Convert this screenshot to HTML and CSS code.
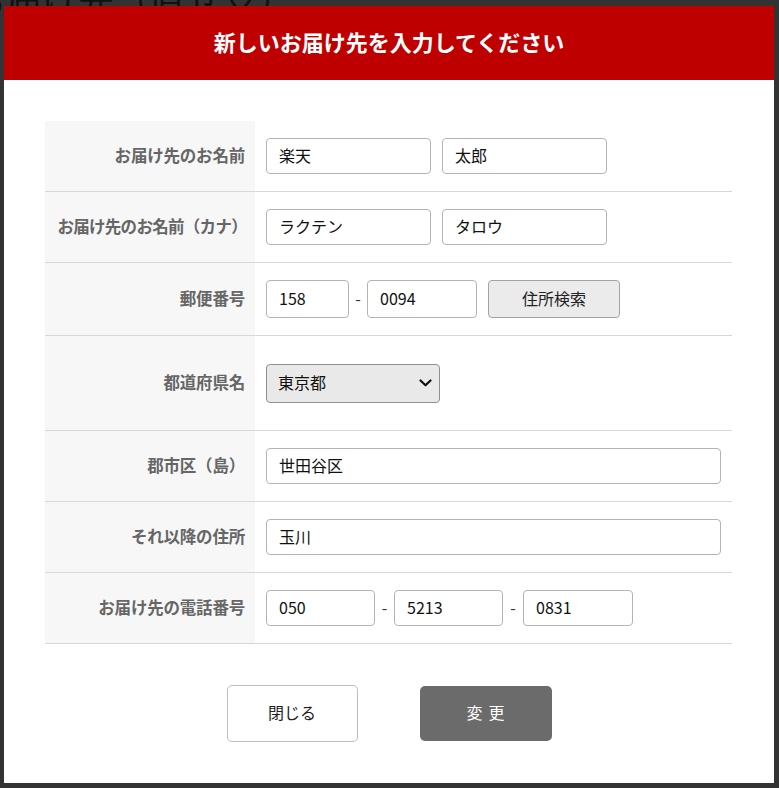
FILE: index.html
```html
<!DOCTYPE html>
<html lang="ja">
<head>
<meta charset="utf-8">
<title>新しいお届け先を入力してください</title>
<link rel="stylesheet" href="styles.css">
</head>
<body>
<div class="page-behind">
  <div class="behind-title">お届け先（直せ支）</div>
</div>
<div class="modal">
  <div class="modal-header">新しいお届け先を入力してください</div>
  <div class="modal-body">
    <div class="form-table">
      <div class="row">
        <div class="label">お届け先のお名前</div>
        <div class="value">
          <input class="inp w-name" type="text" value="楽天">
          <input class="inp w-name" type="text" value="太郎">
        </div>
      </div>
      <div class="row">
        <div class="label label-long">お届け先のお名前（カナ）</div>
        <div class="value">
          <input class="inp w-name" type="text" value="ラクテン">
          <input class="inp w-name" type="text" value="タロウ">
        </div>
      </div>
      <div class="row">
        <div class="label">郵便番号</div>
        <div class="value tight">
          <input class="inp inp-tall w-zip1" type="text" value="158">
          <span class="dash d18">-</span>
          <input class="inp inp-tall w-zip2" type="text" value="0094">
          <button class="btn-search" type="button">住所検索</button>
        </div>
      </div>
      <div class="row row-select">
        <div class="label">都道府県名</div>
        <div class="value">
          <div class="select-wrap">
            <select class="sel"><option>東京都</option></select>
            <svg class="chev" width="13" height="8" viewBox="0 0 13 8"><path d="M1.5 1.5 L6.5 6.3 L11.5 1.5" fill="none" stroke="#111" stroke-width="2.2" stroke-linecap="round" stroke-linejoin="round"/></svg>
          </div>
        </div>
      </div>
      <div class="row">
        <div class="label">郡市区（島）</div>
        <div class="value">
          <input class="inp w-full" type="text" value="世田谷区">
        </div>
      </div>
      <div class="row">
        <div class="label">それ以降の住所</div>
        <div class="value">
          <input class="inp w-full" type="text" value="玉川">
        </div>
      </div>
      <div class="row">
        <div class="label">お届け先の電話番号</div>
        <div class="value tight">
          <input class="inp w-tel" type="text" value="050">
          <span class="dash d19">-</span>
          <input class="inp w-tel" type="text" value="5213">
          <span class="dash d20">-</span>
          <input class="inp w-tel3" type="text" value="0831">
        </div>
      </div>
    </div>
    <div class="actions">
      <button class="btn-close" type="button">閉じる</button>
      <button class="btn-change" type="button">変更</button>
    </div>
  </div>
</div>
</body>
</html>
```
FILE: styles.css
```css
* { box-sizing: border-box; }
html, body { margin: 0; padding: 0; }
body {
  background: #333333;
  width: 779px;
  height: 788px;
  overflow: hidden;
  position: relative;
  font-family: "Noto Sans CJK JP", "Noto Sans", sans-serif;
  color: #222;
}
.behind-title {
  font-size: 36px;
  line-height: 36px;
  margin-top: -20px;
  margin-left: -30px;
  color: #111;
  white-space: nowrap;
}
.modal {
  position: absolute;
  left: 4px;
  top: 6px;
  width: 770px;
  height: 777px;
  background: #fff;
}
.modal-header {
  height: 74px;
  background: #bf0000;
  color: #fff;
  font-weight: bold;
  font-size: 22px;
  display: flex;
  align-items: center;
  justify-content: center;
  padding-bottom: 4px;
}
.modal-body {
  padding: 41px 42px 0 41px;
}
.form-table {
  width: 687px;
}
.row {
  display: grid;
  grid-template-columns: 210px 1fr;
  border-bottom: 1px solid #d8d8d8;
}
.label {
  background: #f7f7f7;
  color: #666;
  font-weight: bold;
  font-size: 16.5px;
  display: flex;
  align-items: center;
  justify-content: flex-end;
  padding-right: 10px;
  padding-bottom: 2px;
  white-space: nowrap;
  letter-spacing: -0.2px;
}
.label-long {
  letter-spacing: -0.7px;
  padding-right: 8px;
}
.value {
  display: flex;
  align-items: center;
  gap: 11px;
  padding: 17px 11px;
}
.value.tight { gap: 0; }
.row-select .value {
  padding: 28px 11px 27px;
}
.inp {
  height: 36px;
  border: 1px solid #b3b3b3;
  border-radius: 4px;
  padding: 0 12px 2px;
  font-family: "Noto Sans CJK JP", "Noto Sans", sans-serif;
  font-size: 16px;
  color: #111;
  background: #fff;
  outline: none;
}
.inp-tall { height: 38px; }
.w-name { width: 165px; }
.w-zip1 { width: 83px; }
.w-zip2 { width: 110px; margin-right: 11px; }
.w-full { width: 455px; }
.w-tel { width: 109px; }
.w-tel3 { width: 110px; }
.dash {
  display: flex;
  justify-content: center;
  font-size: 16px;
  color: #333;
  padding-bottom: 2px;
}
.d18 { width: 18px; }
.d19 { width: 19px; }
.d20 { width: 20px; }
.btn-search {
  width: 132px;
  height: 38px;
  background: #ebebeb;
  border: 1px solid #a3a3a3;
  border-radius: 4px;
  font-family: "Noto Sans CJK JP", "Noto Sans", sans-serif;
  font-size: 16px;
  color: #222;
  padding: 0 0 3px;
}
.select-wrap {
  position: relative;
  width: 174px;
  height: 39px;
}
.sel {
  appearance: none;
  -webkit-appearance: none;
  width: 174px;
  height: 39px;
  background: #e9e9e9;
  border: 1px solid #8f8f8f;
  border-radius: 4px;
  padding: 0 30px 3px 11px;
  font-family: "Noto Sans CJK JP", "Noto Sans", sans-serif;
  font-size: 16px;
  color: #111;
}
.chev {
  position: absolute;
  left: 153px;
  top: 15px;
  pointer-events: none;
}
.actions {
  display: flex;
  justify-content: center;
  align-items: center;
  gap: 62px;
  padding-top: 41px;
  margin-left: 1px;
}
.btn-close {
  width: 131px;
  height: 57px;
  background: #fff;
  border: 1px solid #bdbdbd;
  border-radius: 5px;
  font-family: "Noto Sans CJK JP", "Noto Sans", sans-serif;
  font-size: 16px;
  color: #222;
  padding: 0 0 3px;
}
.btn-change {
  width: 132px;
  height: 55px;
  background: #6b6b6b;
  border: none;
  border-radius: 5px;
  font-family: "Noto Sans CJK JP", "Noto Sans", sans-serif;
  font-size: 16px;
  color: #fff;
  letter-spacing: 6px;
  padding: 0 0 3px 6px;
}
```
